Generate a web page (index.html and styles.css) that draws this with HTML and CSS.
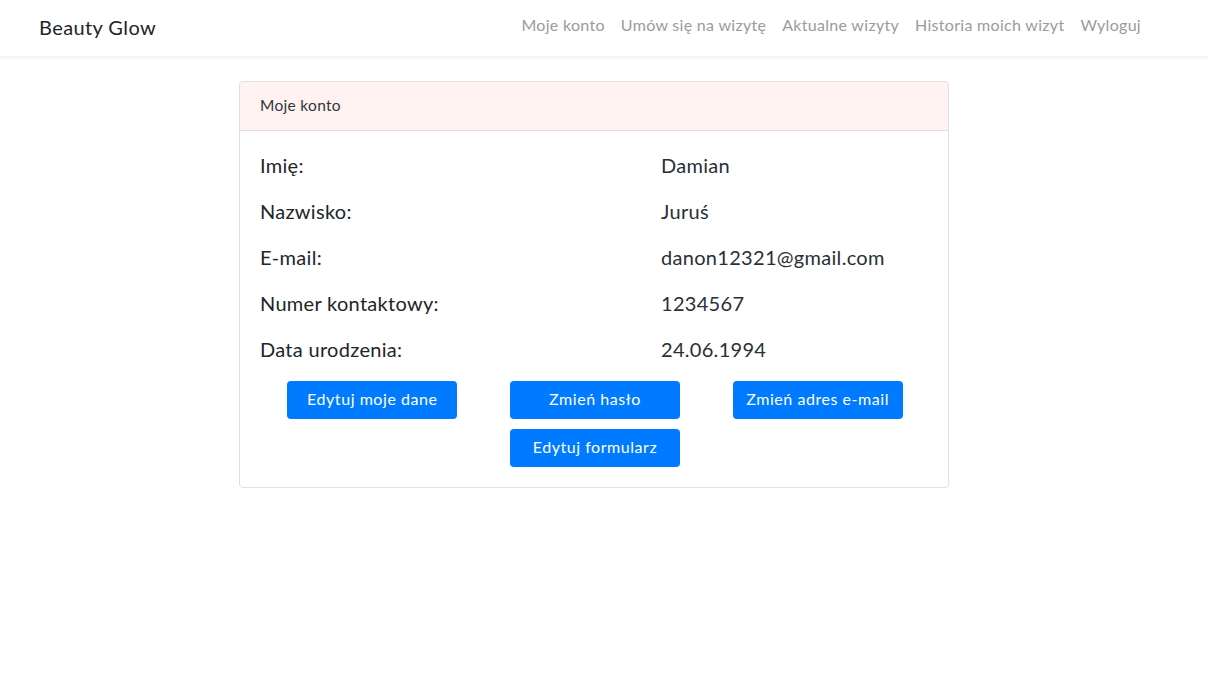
FILE: index.html
```html
<!DOCTYPE html>
<html lang="pl">
<head>
<meta charset="utf-8">
<title>Beauty Glow - Moje konto</title>
<link rel="stylesheet" href="styles.css">
</head>
<body>
<nav class="navbar">
  <a class="brand" href="#">Beauty Glow</a>
  <ul class="nav-links">
    <li><a href="#">Moje konto</a></li>
    <li><a href="#">Umów się na wizytę</a></li>
    <li><a href="#">Aktualne wizyty</a></li>
    <li><a href="#">Historia moich wizyt</a></li>
    <li><a href="#">Wyloguj</a></li>
  </ul>
</nav>
<main class="main">
  <section class="card">
    <div class="card-header">Moje konto</div>
    <div class="card-body">
      <dl class="info">
        <dt>Imię:</dt><dd>Damian</dd>
        <dt>Nazwisko:</dt><dd>Juruś</dd>
        <dt>E-mail:</dt><dd>danon12321@gmail.com</dd>
        <dt>Numer kontaktowy:</dt><dd>1234567</dd>
        <dt>Data urodzenia:</dt><dd>24.06.1994</dd>
      </dl>
      <div class="actions">
        <div class="cell"><button class="btn">Edytuj moje dane</button></div>
        <div class="cell"><button class="btn">Zmień hasło</button></div>
        <div class="cell"><button class="btn">Zmień adres e-mail</button></div>
        <div class="cell"></div>
        <div class="cell"><button class="btn">Edytuj formularz</button></div>
        <div class="cell"></div>
      </div>
    </div>
  </section>
</main>
</body>
</html>
```
FILE: styles.css
```css
* { box-sizing: border-box; }
html, body { margin: 0; padding: 0; }
body {
  font-family: "Lato", "Noto Sans", sans-serif;
  color: #212529;
  background: #fff;
  font-size: 16px;
  line-height: 1.5;
}
.navbar {
  height: 57px;
  display: flex;
  align-items: center;
  padding: 0 59px 0 39px;
  background: #fff;
  box-shadow: 0 2px 4px rgba(0,0,0,0.04);
  border-bottom: 1px solid #f3f3f3;
}
.brand {
  font-size: 20px;
  color: #212529;
  text-decoration: none;
  letter-spacing: 0.4px;
  margin-top: -3px;
}
.nav-links {
  list-style: none;
  margin: -6px 0 0 auto;
  padding: 0;
  display: flex;
}
.nav-links a {
  display: block;
  padding: 8px;
  color: #9b9b9b;
  text-decoration: none;
  font-size: 16px;
  letter-spacing: 0.3px;
}
.main {
  padding-top: 24px;
  padding-left: 239px;
}
.card {
  width: 710px;
  border: 1px solid #dfdfdf;
  border-radius: 4px;
  overflow: hidden;
}
.card-header {
  background: #fff2f0;
  border-bottom: 1px solid #dfdfdf;
  padding: 12px 20px;
  height: 49px;
  font-size: 15.5px;
  color: #2f3640;
  letter-spacing: 0.3px;
}
.card-body {
  padding: 19px 19px 20px 21px;
}
.info {
  margin: 0 0 0 -1px;
  display: grid;
  grid-template-columns: 401px 1fr;
  row-gap: 16px;
  font-size: 20px;
  line-height: 30px;
}
.info dt, .info dd { margin: 0; letter-spacing: 0.3px; }
.info dd { color: #2a2f36; }
.actions {
  margin-top: 17px;
  display: grid;
  grid-template-columns: repeat(3, 1fr);
  row-gap: 10px;
}
.cell { display: flex; justify-content: center; }
.btn {
  width: 170px;
  height: 38px;
  border: none;
  border-radius: 4px;
  background: #007bff;
  color: #fff;
  font-family: inherit;
  font-size: 16px;
  letter-spacing: 0.55px;
  padding: 0 0 3px;
  cursor: pointer;
}
```
